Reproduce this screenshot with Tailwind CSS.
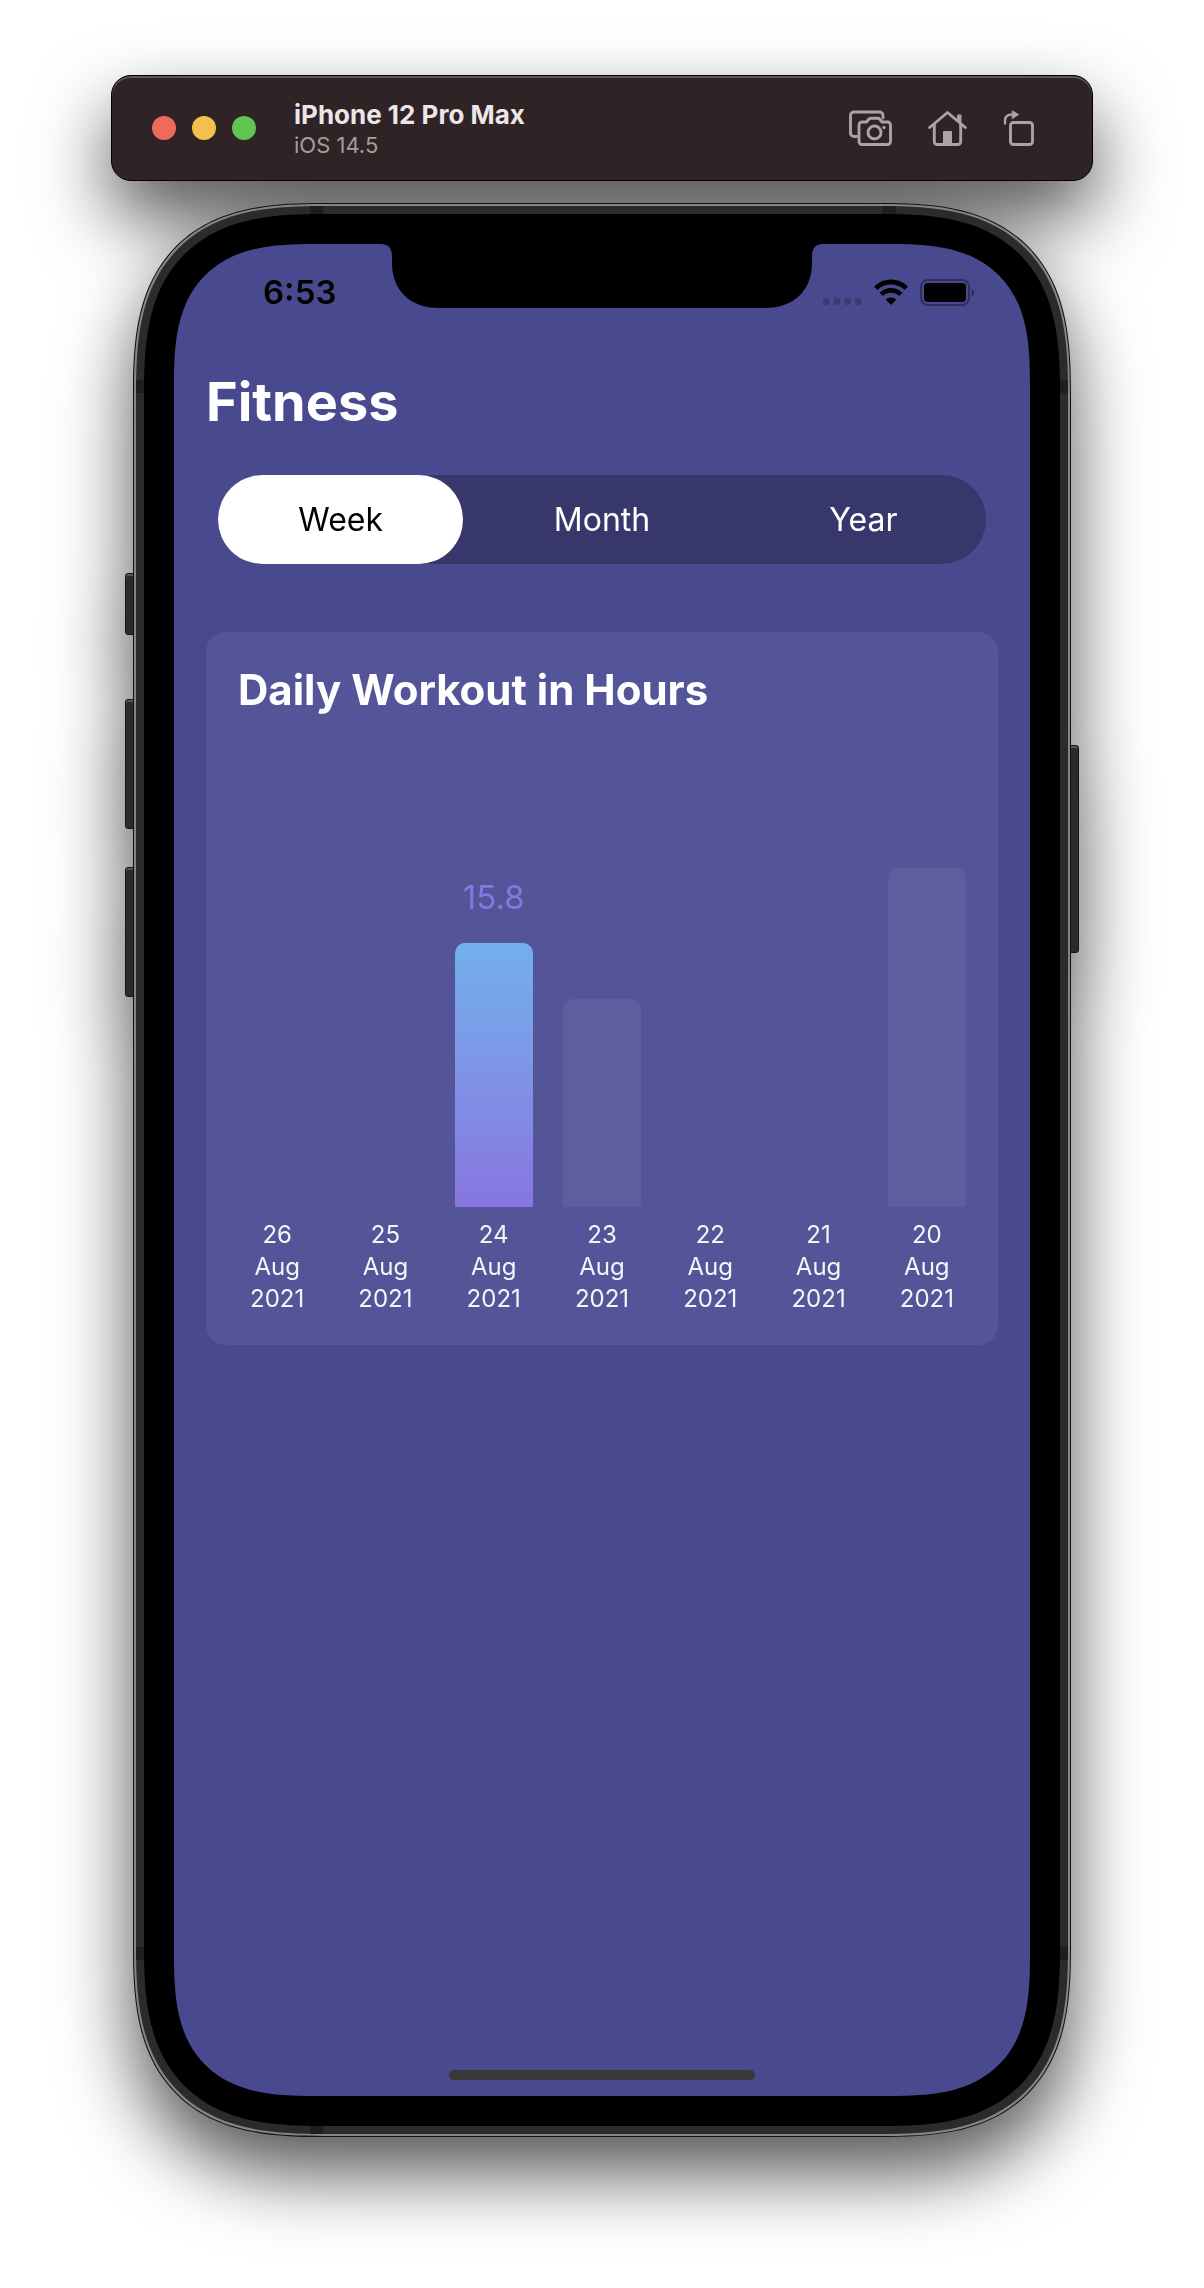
<!DOCTYPE html>
<html lang="en">
<head>
<meta charset="utf-8">
<meta name="viewport" content="width=device-width, initial-scale=1">
<title>Fitness</title>
<script src="https://cdn.jsdelivr.net/npm/@tailwindcss/browser@4"></script>
</head>
<body class="bg-white font-[Inter,'Liberation_Sans',sans-serif] text-white">
<main class="px-[111px] pt-[75px] pb-[151px] filter-[drop-shadow(0_36px_37px_rgba(0,0,0,0.67))]">

  <!-- Simulator toolbar -->
  <header class="flex h-[106px] items-center rounded-[20px] border border-black bg-[#2f2325] px-10 inset-shadow-[0_2px_0_#5e5556]">
    <div class="flex gap-4">
      <button type="button" aria-label="Close" class="size-6 rounded-full bg-[#ec6a5e]"></button>
      <button type="button" aria-label="Minimize" class="size-6 rounded-full bg-[#f4bf4f]"></button>
      <button type="button" aria-label="Zoom" class="size-6 rounded-full bg-[#61c554]"></button>
    </div>
    <div class="ml-[38px] flex-1 pt-[2px]">
      <p class="text-[26px] leading-8 font-bold text-[#ebe6e7]">iPhone 12 Pro Max</p>
      <p class="text-[22px] leading-7 text-[#a79c9e]">iOS 14.5</p>
    </div>
    <div class="mr-[17px] flex items-center gap-9 text-[#ada2a4]">
      <button type="button" aria-label="Screenshot">
        <svg class="h-9 w-[43px]" viewBox="0 0 43 36" fill="none" stroke="currentColor" stroke-width="2.900" stroke-linejoin="round" stroke-linecap="round">
          <path d="M7.500 26.500H5a3.500 3.500 0 0 1-3.500-3.500V5.500A3.500 3.500 0 0 1 5 2h25.500A3.500 3.500 0 0 1 34 5.500V8"/>
          <path d="M13 12h4.500l2.500-3q.7-.8 1.800-.8h7q1.100 0 1.800.8l2.400 3H38.500a3 3 0 0 1 3 3v16.500a3 3 0 0 1-3 3H13a3 3 0 0 1-3-3V15a3 3 0 0 1 3-3Z"/>
          <circle cx="25.500" cy="22.500" r="6.500"/>
          <circle cx="35" cy="17.500" r="1.700" fill="currentColor" stroke="none"/>
        </svg>
      </button>
      <button type="button" aria-label="Home">
        <svg class="h-9 w-[39px]" viewBox="0 0 39 36" fill="none" stroke="currentColor" stroke-width="2.900" stroke-linejoin="round" stroke-linecap="round">
          <path d="M1.700 17.500 19.500 2.500 37.300 17.500"/>
          <path d="M6.300 14.500V31.500a3 3 0 0 0 3 3h20.400a3 3 0 0 0 3-3V14.500"/>
          <path d="M29.700 10.500V5.200h3.200v8z" fill="currentColor" stroke-width="1.200"/>
          <path d="M15 34V22q0-1 1-1h7q1 0 1 1V34z" fill="currentColor" stroke="none"/>
        </svg>
      </button>
      <button type="button" aria-label="Rotate">
        <svg class="h-9 w-8" viewBox="0 0 32 36" fill="none" stroke="currentColor" stroke-width="2.900" stroke-linejoin="round" stroke-linecap="round">
          <rect x="7.500" y="12.500" width="22" height="22" rx="3"/>
          <path d="M2 13.500V11q0-6.500 7-6.500" stroke-width="2.400"/>
          <path d="M9.500 1 15.500 4.500 9.500 8.500z" fill="currentColor" stroke-width="1"/>
        </svg>
      </button>
    </div>
  </header>

  <!-- Phone -->
  <section class="relative mx-[22px] mt-[22px]">
    <span class="absolute top-[370px] -left-2 h-[62px] w-3 rounded-[3px] border border-[#161616] bg-[#2b2b2b] inset-shadow-[0_2px_0_#555]"></span>
    <span class="absolute top-[496px] -left-2 h-[130px] w-3 rounded-[3px] border border-[#161616] bg-[#2b2b2b] inset-shadow-[0_2px_0_#555]"></span>
    <span class="absolute top-[664px] -left-2 h-[130px] w-3 rounded-[3px] border border-[#161616] bg-[#2b2b2b] inset-shadow-[0_2px_0_#555]"></span>
    <span class="absolute top-[542px] -right-2 h-[208px] w-3 rounded-[3px] border border-[#161616] bg-[#2b2b2b] inset-shadow-[0_2px_0_#555]"></span>

    <div class="relative rounded-[148px] bg-[#111] p-px supports-[corner-shape:squircle]:rounded-[190px] supports-[corner-shape:squircle]:[corner-shape:superellipse(1.43)]">
     <div class="rounded-[147px] bg-[#858585] p-[2px] supports-[corner-shape:squircle]:rounded-[189px] supports-[corner-shape:squircle]:[corner-shape:superellipse(1.43)]">
      <div class="relative overflow-hidden rounded-[145px] bg-[#2b2b2b] p-2 supports-[corner-shape:squircle]:rounded-[187px] supports-[corner-shape:squircle]:[corner-shape:superellipse(1.43)]">
        <!-- Antenna bands -->
        <span class="absolute top-0 left-[174px] h-2 w-[13px] bg-[#1e1e1e]"></span>
        <span class="absolute top-0 right-[172px] h-2 w-[14px] bg-[#1e1e1e]"></span>
        <span class="absolute top-[174px] left-0 h-[13px] w-2 bg-[#1e1e1e]"></span>
        <span class="absolute top-[174px] right-0 h-[13px] w-2 bg-[#1e1e1e]"></span>
        <span class="absolute bottom-[174px] left-0 h-[13px] w-2 bg-[#1e1e1e]"></span>
        <span class="absolute right-0 bottom-[174px] h-[13px] w-2 bg-[#1e1e1e]"></span>
        <span class="absolute bottom-0 left-[174px] h-2 w-[13px] bg-[#1e1e1e]"></span>

        <div class="rounded-[137px] bg-black p-[30px] supports-[corner-shape:squircle]:rounded-[178px] supports-[corner-shape:squircle]:[corner-shape:superellipse(1.43)]">
          <div class="relative aspect-[856/1852] overflow-hidden rounded-[110px] bg-[#494990] px-8 pt-7 supports-[corner-shape:squircle]:rounded-[140px] supports-[corner-shape:squircle]:[corner-shape:superellipse(1.46)]">
            <svg class="absolute top-0 left-1/2 h-16 w-[444px] -translate-x-1/2" viewBox="0 0 444 64" aria-hidden="true">
              <path d="M0 0C9 0 12 4 12 13V19C12 46 30 64 59 64H385C414 64 432 46 432 19V13C432 4 435 0 444 0Z" fill="#000"/>
            </svg>

            <div class="flex h-10 items-center justify-between pr-[23px] pl-[57px] text-black">
              <time class="text-[33px] leading-10 font-semibold">6:53</time>
              <div class="flex items-center gap-3">
                <svg class="h-[26px] w-[39px] text-[#3b3a73]" viewBox="0 0 39 26" fill="currentColor" aria-hidden="true">
                  <rect x="0" y="19" width="6.500" height="7" rx="2"/><rect x="10.700" y="19" width="6.500" height="7" rx="2"/><rect x="21.400" y="19" width="6.500" height="7" rx="2"/><rect x="32" y="19" width="6.500" height="7" rx="2"/>
                </svg>
                <svg class="h-[26px] w-[34px]" viewBox="0 0 34 26" aria-hidden="true">
                  <g fill="none" stroke="#000" stroke-width="4.800">
                    <path d="M1.700 9.200a22 22 0 0 1 30.600 0"/>
                    <path d="M7.200 15.400a14 14 0 0 1 19.600 0"/>
                  </g>
                  <path d="M17 26 11.700 20.600a8 8 0 0 1 10.600 0z"/>
                </svg>
                <svg class="h-[27px] w-[55px]" viewBox="0 0 55 27" aria-hidden="true">
                  <rect x="1" y="1" width="48" height="25" rx="7" fill="none" stroke="#2f2e5e" stroke-width="2"/>
                  <rect x="4" y="4" width="42" height="19" rx="4"/>
                  <path d="M51.500 9.500q3 1.500 3 4.200t-3 4.200z" fill="#2f2e5e"/>
                </svg>
              </div>
            </div>

            <h1 class="mt-[58px] text-[54px] leading-16 font-bold">Fitness</h1>

            <div role="group" aria-label="Period" class="mx-3 mt-[41px] grid h-[89px] grid-cols-3 gap-4 rounded-full bg-[#38376b] text-[32px]">
              <button type="button" aria-pressed="true" class="rounded-full bg-white text-black">Week</button>
              <button type="button" aria-pressed="false" class="rounded-full">Month</button>
              <button type="button" aria-pressed="false" class="rounded-full">Year</button>
            </div>

            <section class="mt-[68px] rounded-[20px] bg-[#545598] px-8 pt-8 pb-[30px]">
              <h2 class="text-[42px] leading-[52px] font-bold whitespace-nowrap">Daily Workout in Hours</h2>
              <ol class="grid grid-cols-7 gap-[30px] text-center text-[24px] leading-8 text-[#f4f4f9]">
                <li><div class="h-[491px]"></div><p class="mt-3">26<br>Aug<br>2021</p></li>
                <li><div class="h-[491px]"></div><p class="mt-3">25<br>Aug<br>2021</p></li>
                <li>
                  <div class="flex h-[491px] flex-col justify-end">
                    <span class="mb-[26px] text-[33px] leading-10 text-[#8477e0]">15.8</span>
                    <div class="rounded-t-[10px] bg-linear-to-b from-[#71b0ec] to-[#8775e0]" style="height:53.8%"></div>
                  </div>
                  <p class="mt-3">24<br>Aug<br>2021</p>
                </li>
                <li>
                  <div class="flex h-[491px] flex-col justify-end"><div class="rounded-t-[10px] bg-[#5f5d9d]" style="height:42.4%"></div></div>
                  <p class="mt-3">23<br>Aug<br>2021</p>
                </li>
                <li><div class="h-[491px]"></div><p class="mt-3">22<br>Aug<br>2021</p></li>
                <li><div class="h-[491px]"></div><p class="mt-3">21<br>Aug<br>2021</p></li>
                <li>
                  <div class="flex h-[491px] flex-col justify-end"><div class="rounded-t-[10px] bg-[#5f5d9d]" style="height:69%"></div></div>
                  <p class="mt-3">20<br>Aug<br>2021</p>
                </li>
              </ol>
            </section>

            <span class="absolute bottom-4 left-1/2 h-[10px] w-[306px] -translate-x-1/2 rounded-full bg-[#383838]"></span>
          </div>
        </div>
      </div>
     </div>
    </div>
  </section>
</main>
</body>
</html>
